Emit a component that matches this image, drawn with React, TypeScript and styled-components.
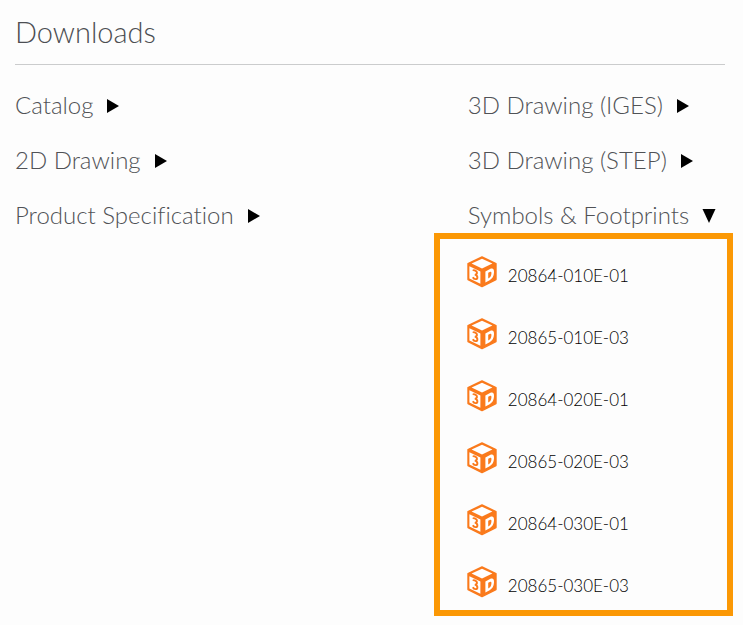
import React, { useState } from "react";
import styled, { createGlobalStyle } from "styled-components";

const GlobalStyle = createGlobalStyle`
  * { box-sizing: border-box; }
  body {
    margin: 0;
    background: #fdfdfd;
    font-family: Lato, sans-serif;
    font-weight: 300;
    font-variant-ligatures: none;
  }
`;

const Page = styled.main`
  padding: 12px 10px 9px 15px;
`;

const Title = styled.h1`
  margin: 0 8px 24px 0;
  padding-bottom: 12px;
  border-bottom: 1px solid #cbcccd;
  color: #4c4e52;
  font-size: 29px;
  font-weight: 300;
  line-height: 40px;
`;

const Columns = styled.div`
  display: grid;
  grid-template-columns: 7fr 5fr;
  align-items: start;
`;

const Column = styled.div`
  display: flex;
  flex-direction: column;
  gap: 24px;
`;

const Section = styled.section<{ $inset?: boolean }>`
  & > button {
    margin-left: ${(p) => (p.$inset ? 34 : 0)}px;
  }
`;

const Toggle = styled.button`
  display: flex;
  align-items: center;
  gap: 13px;
  padding: 0;
  border: 0;
  background: none;
  color: #505256;
  font: inherit;
  font-size: 24px;
  line-height: 31px;
  white-space: nowrap;
  cursor: pointer;
`;

const Arrow = styled.svg`
  display: block;
  flex: none;
  width: 14px;
  height: 14px;
  margin-top: 2px;
  fill: #000;
`;

const FileList = styled.ul`
  display: flex;
  flex-direction: column;
  gap: 30px;
  margin: 3px 0 0;
  padding: 17px 27px 12px;
  border: 6px solid #fb9805;
  list-style: none;
`;

const FileLink = styled.a`
  display: flex;
  align-items: center;
  gap: 11px;
  height: 32px;
  color: #000;
  font-size: 17px;
  line-height: 24px;
  text-decoration: none;
  white-space: nowrap;
`;

const FileName = styled.span`
  padding-top: 8px;
`;

const Cube = styled.svg`
  display: block;
  flex: none;
  width: 30px;
  height: 32px;
`;

const CubeIcon = () => (
  <Cube viewBox="0 0 30 32" aria-hidden="true">
    <path
      d="M15 1 L29 7.6 V23.6 L15 30.6 L1 23.6 V7.6 Z"
      fill="#fa7a1c"
      stroke="#fa7a1c"
      strokeWidth="1.4"
      strokeLinejoin="round"
    />
    <path d="M15 2.8 L25.4 7.6 L15 12.6 L4.6 7.6 Z" fill="#fff" />
    <path d="M2.4 10.2 L13.4 15.6 V27.8 L2.4 22.4 Z" fill="#fff" />
    <path
      d="M6 14.8 C6.8 13.4 10.2 14.8 10 17 C9.9 18.4 9 18.6 7.8 18.3 C9.4 18.9 10.5 19.8 10.4 21.6 C10.2 24 7 23.4 5.8 21.2"
      fill="none"
      stroke="#fa7a1c"
      strokeWidth="1.9"
    />
    <path
      d="M18.4 15.4 L23 13 C26 11.8 27.2 13.2 27 16.6 C26.8 20.4 25.4 22.6 22.6 24.2 L18.4 26.4 Z"
      fill="#fff"
    />
    <path
      d="M21.2 16.8 L22.8 16 C24.2 15.4 24.6 16 24.4 17.8 C24.2 19.8 23.6 21 22.4 21.8 L21.2 22.4 Z"
      fill="#fa7a1c"
    />
  </Cube>
);

type Group = { label: string; files?: string[] };

const left: Group[] = [
  { label: "Catalog" },
  { label: "2D Drawing" },
  { label: "Product Specification" },
];

const right: Group[] = [
  { label: "3D Drawing (IGES)" },
  { label: "3D Drawing (STEP)" },
  {
    label: "Symbols & Footprints",
    files: [
      "20864-010E-01",
      "20865-010E-03",
      "20864-020E-01",
      "20865-020E-03",
      "20864-030E-01",
      "20865-030E-03",
    ],
  },
];

const Disclosure = ({ group, inset }: { group: Group; inset?: boolean }) => {
  const [open, setOpen] = useState(Boolean(group.files));
  return (
    <Section $inset={inset}>
      <Toggle type="button" aria-expanded={open} onClick={() => setOpen(!open)}>
        {group.label}
        <Arrow viewBox="0 0 14 14" aria-hidden="true">
          <path d={open ? "M0.5 0 H13.5 L7 14 Z" : "M1 0 L13 7 L1 14 Z"} />
        </Arrow>
      </Toggle>
      {open && group.files && (
        <FileList>
          {group.files.map((name) => (
            <li key={name}>
              <FileLink href={`#${name}`}>
                <CubeIcon />
                <FileName>{name}</FileName>
              </FileLink>
            </li>
          ))}
        </FileList>
      )}
    </Section>
  );
};

export default function App() {
  return (
    <Page>
      <GlobalStyle />
      <Title>Downloads</Title>
      <Columns>
        <Column>
          {left.map((group) => (
            <Disclosure key={group.label} group={group} />
          ))}
        </Column>
        <Column>
          {right.map((group) => (
            <Disclosure key={group.label} group={group} inset />
          ))}
        </Column>
      </Columns>
    </Page>
  );
}
